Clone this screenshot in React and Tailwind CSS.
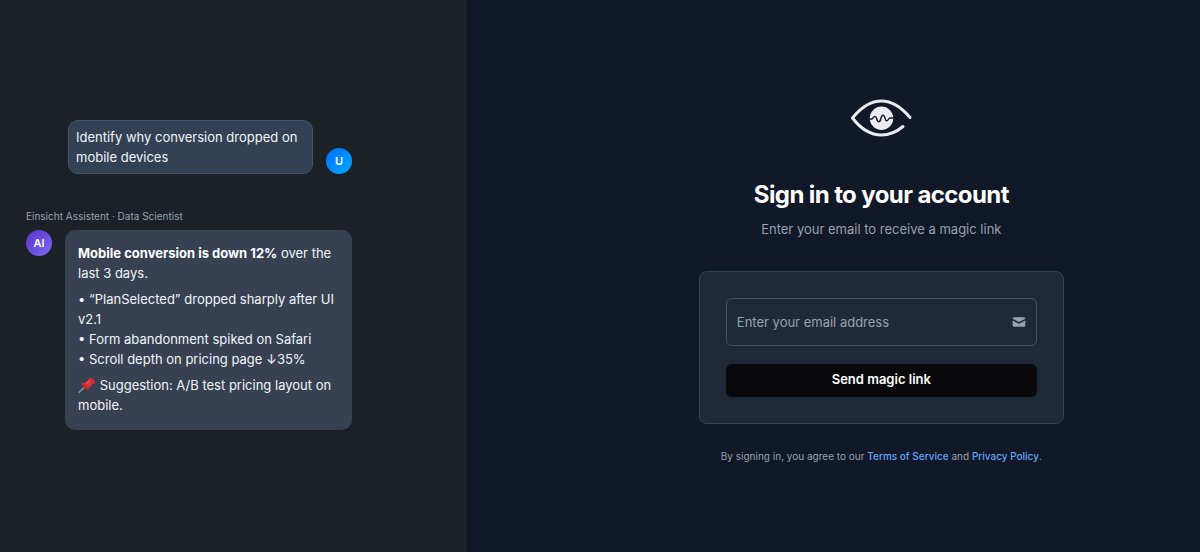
import { useState } from 'react';

function EyeLogo() {
  return (
    <svg
      viewBox="0 0 84 56"
      className="w-21 h-14"
      fill="none"
      strokeLinecap="round"
      strokeLinejoin="round"
      aria-label="Einsicht"
      role="img"
    >
      <path
        d="M71 27.5C63 18 53.5 11 42.5 11C31 11 21.5 18 13.5 28C21.5 38.5 31 45 42.5 45C51 45 58 41.5 64 36.5"
        stroke="#ececf0"
        strokeWidth="3"
      />
      <circle cx="42.5" cy="28.3" r="11.7" fill="#ececf0" />
      <path
        d="M31 29H32.6C34.4 29 34.2 26.4 36 26.4C38.4 26.4 37.2 31.8 39.8 31.8C42.4 31.8 41.4 25.2 44 25.2C46.6 25.2 45.4 30.8 47.6 30.8C49.6 30.8 49 28 51.4 28H54.2"
        stroke="#111827"
        strokeWidth="1.4"
      />
    </svg>
  );
}

function PinIcon() {
  return (
    <svg viewBox="0 0 18 16" className="inline-block w-[18px] h-4 align-[-3px]" aria-hidden="true">
      <path d="M7.6 9.2L1.2 15.2" stroke="#8b95a3" strokeWidth="1.5" strokeLinecap="round" />
      <path d="M3.2 5.9C5.2 5.1 7.3 5.5 9 7.2C10.8 8.9 11.5 11 10.8 13.2C8.5 12.6 4.2 9.5 3.2 5.9Z" fill="#c9252d" />
      <path d="M6.5 6.4L11.2 2.8L14.8 6.2L11 10.9C9.8 10.3 7.3 8.2 6.5 6.4Z" fill="#e0353c" />
      <path d="M10.3 1.2C12 .3 14.2.8 15.6 2.2C17.1 3.7 17.5 5.7 16.5 7.3C14.2 7 10.8 4 10.3 1.2Z" fill="#d32c34" />
      <path d="M8 6.4L11.6 3.7" stroke="#f2777b" strokeWidth=".8" strokeLinecap="round" />
    </svg>
  );
}

function EnvelopeIcon() {
  return (
    <svg viewBox="0 0 20 20" className="size-4" fill="currentColor" aria-hidden="true">
      <path d="M2.003 5.884L10 9.882l7.997-3.998A2 2 0 0016 4H4a2 2 0 00-1.997 1.884z" />
      <path d="M18 8.118l-8 4-8-4V14a2 2 0 002 2h12a2 2 0 002-2V8.118z" />
    </svg>
  );
}

function ChatPreview() {
  return (
    <div className="w-full max-w-[326px] text-[13px] leading-5 text-slate-100">
      {/* User message */}
      <div className="flex items-end justify-end gap-[13px]">
        <div className="w-[245px] rounded-[10px] border border-slate-600 bg-[#334155] px-[7px] py-1.5">
          Identify why conversion dropped on mobile devices
        </div>
        <div className="flex size-[26px] shrink-0 items-center justify-center rounded-full bg-linear-to-br from-[#0a6cff] to-[#00aaff] text-[11px] font-semibold text-white">
          U
        </div>
      </div>

      {/* Assistant message */}
      <p className="mt-8 text-[10px] text-gray-400">Einsicht Assistent · Data Scientist</p>
      <div className="mt-1 flex items-start gap-[13px]">
        <div className="flex size-[26px] shrink-0 items-center justify-center rounded-full bg-linear-to-br from-[#5b2fc9] to-[#7c6bf5] text-[11px] font-semibold text-white">
          AI
        </div>
        <div className="flex-1 space-y-1.5 rounded-[10px] bg-[#374151] px-[13px] pt-[13px] pb-[15px]">
          <p>
            <strong className="font-bold text-white">Mobile conversion is down 12%</strong> over the last 3 days.
          </p>
          <ul>
            <li>• “PlanSelected” dropped sharply after UI v2.1</li>
            <li>• Form abandonment spiked on Safari</li>
            <li>• Scroll depth on pricing page ↓35%</li>
          </ul>
          <p>
            <PinIcon /> Suggestion: A/B test pricing layout on mobile.
          </p>
        </div>
      </div>
    </div>
  );
}

function SignInForm() {
  const [email, setEmail] = useState('');

  return (
    <form
      onSubmit={e => e.preventDefault()}
      className="mt-8 w-full rounded-lg border border-[#334155] bg-[#1f2a38] p-[26px]"
    >
      <div className="flex h-12 items-center rounded-md border border-[#475160] pr-[9px]">
        <input
          type="email"
          aria-label="Email address"
          value={email}
          onChange={e => setEmail(e.target.value)}
          placeholder="Enter your email address"
          autoComplete="email"
          className="h-full min-w-0 flex-1 bg-transparent pl-2.5 text-[13px] text-white placeholder-gray-400 focus:outline-none"
        />
        <span className="text-gray-400">
          <EnvelopeIcon />
        </span>
      </div>
      <button
        type="submit"
        className="mt-[18px] h-[33px] w-full rounded-md bg-[#09090b] text-[13px] font-semibold text-white shadow-sm"
      >
        Send magic link
      </button>
    </form>
  );
}

export default function App() {
  return (
    <div className="grid min-h-screen grid-cols-[7fr_11fr] bg-[#111827] font-['Inter',sans-serif]">
      <aside className="flex items-center bg-[#1c2127] px-[26px] pb-[3px]">
        <ChatPreview />
      </aside>

      <main className="flex items-center justify-center pt-px pl-24">
        <div className="flex w-full max-w-[365px] flex-col items-center">
          <EyeLogo />
          <h1 className="mt-[33px] text-2xl font-bold tracking-tight text-white">Sign in to your account</h1>
          <p className="mt-2 text-[13px] leading-5 text-gray-400">Enter your email to receive a magic link</p>
          <SignInForm />
          <p className="mt-6 text-[10px] leading-4 text-gray-400">
            By signing in, you agree to our{' '}
            <a href="#terms" className="font-medium text-[#60a5fa]">Terms of Service</a> and{' '}
            <a href="#privacy" className="font-medium text-[#60a5fa]">Privacy Policy</a>.
          </p>
        </div>
      </main>
    </div>
  );
}
